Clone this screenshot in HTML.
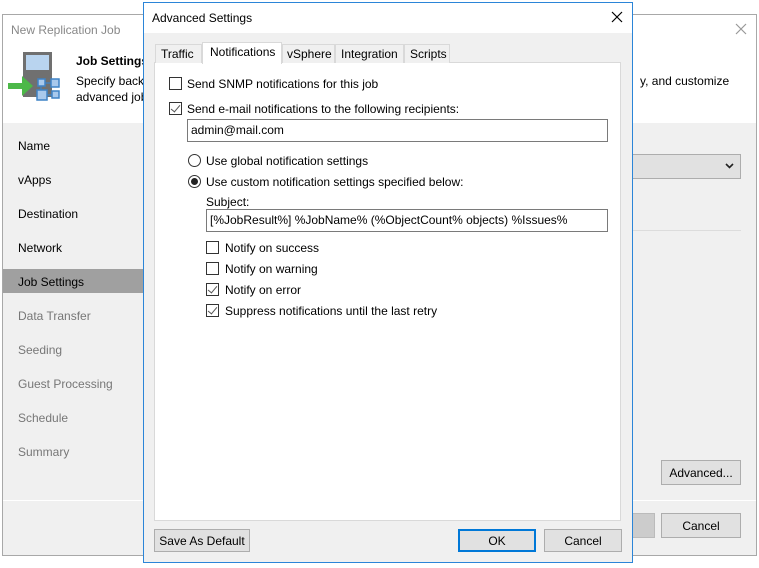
<!DOCTYPE html>
<html><head><style>
*{box-sizing:border-box;margin:0;padding:0}
body{width:759px;height:568px;background:#fff;font-family:"Liberation Sans",sans-serif;font-size:12px;color:#000;position:relative;overflow:hidden}
.a{position:absolute}
.cb{position:absolute;width:13px;height:13px;border:1px solid #333;background:#fff}
.cb.c::after{content:"";position:absolute;left:3px;top:0px;width:4px;height:8px;border:solid #555;border-width:0 1.5px 1.5px 0;transform:rotate(40deg)}
.rb{position:absolute;width:13px;height:13px;border:1px solid #333;border-radius:50%;background:#fff}
.rb.c::after{content:"";position:absolute;left:2px;top:2px;width:7px;height:7px;border-radius:50%;background:#222}
.btn{position:absolute;background:#e1e1e1;border:1px solid #adadad;text-align:center;line-height:22px}
.nav{position:absolute;left:18px}
.tab{position:absolute;top:44px;height:19px;border:1px solid #d9d9d9;border-bottom:none;background:#f0f0f0;line-height:18px;padding-left:5px}
</style></head><body>
<div class="a" style="left:2px;top:14px;width:755px;height:542px;border:1px solid #a8a8a8;background:#f0f0f0"></div>
<div class="a" style="left:3px;top:15px;width:753px;height:108px;background:#fff"></div>
<div class="a" style="left:11px;top:23px;color:#888;font-size:12px">New Replication Job</div>
<svg class="a" style="left:735px;top:23px" width="12" height="12"><path d="M1 1L11 11M11 1L1 11" stroke="#999" stroke-width="1.2"/></svg>
<svg class="a" style="left:8px;top:50px" width="56" height="52">
<rect x="15" y="2" width="29" height="45" fill="#707070"/>
<rect x="18" y="5" width="23" height="15" fill="#b9d4ef"/>
<path d="M0 33h14v-7l11 10-11 10v-7H0z" fill="#4cb848"/>
<path d="M33 31v15M33 33h15M33 45h12" stroke="#3f83c6" stroke-width="1.2"/>
<g fill="#a9c9ec" stroke="#3f83c6" stroke-width="1.5"><rect x="30" y="29" width="7" height="7"/><rect x="43" y="29" width="8" height="8"/><rect x="29" y="40" width="10" height="10"/><rect x="44" y="41" width="7" height="7"/></g>
</svg>
<div class="a" style="left:76px;top:54px;font-weight:bold">Job Settings</div>
<div class="a" style="left:76px;top:74px">Specify backup</div>
<div class="a" style="left:76px;top:90px">advanced job</div>
<div class="a" style="left:640px;top:74px">y, and customize</div>
<div class="a" style="left:3px;top:269px;width:141px;height:24px;background:#a0a0a0"></div>
<div class="nav" style="top:139px">Name</div>
<div class="nav" style="top:173px">vApps</div>
<div class="nav" style="top:207px">Destination</div>
<div class="nav" style="top:241px">Network</div>
<div class="nav" style="top:275px">Job Settings</div>
<div class="nav" style="top:309px;color:#777">Data Transfer</div>
<div class="nav" style="top:343px;color:#777">Seeding</div>
<div class="nav" style="top:377px;color:#777">Guest Processing</div>
<div class="nav" style="top:411px;color:#777">Schedule</div>
<div class="nav" style="top:445px;color:#777">Summary</div>
<div class="a" style="left:3px;top:500px;width:753px;height:1px;background:#fff"></div>
<div class="a" style="left:630px;top:154px;width:111px;height:25px;background:#e1e1e1;border:1px solid #adadad"></div>
<svg class="a" style="left:725px;top:163px" width="9" height="6"><path d="M1 1L4.5 4.5L8 1" stroke="#222" stroke-width="1.6" fill="none"/></svg>
<div class="a" style="left:630px;top:230px;width:111px;height:1px;background:#dcdcdc"></div>
<div class="btn" style="left:661px;top:460px;width:80px;height:25px;line-height:24px">Advanced...</div>
<div class="btn" style="left:630px;top:513px;width:25px;height:25px;background:#ccc;border-color:#bbb"></div>
<div class="btn" style="left:661px;top:513px;width:80px;height:25px;line-height:24px">Cancel</div>
<div class="a" style="left:143px;top:2px;width:490px;height:561px;border:1px solid #2b85d8;background:#f0f0f0"></div>
<div class="a" style="left:144px;top:3px;width:488px;height:30px;background:#fff"></div>
<div class="a" style="left:152px;top:11px">Advanced Settings</div>
<svg class="a" style="left:611px;top:11px" width="12" height="12"><path d="M1 1L11 11M11 1L1 11" stroke="#000" stroke-width="1.2"/></svg>
<div class="a" style="left:154px;top:62px;width:467px;height:459px;background:#fff;border:1px solid #d9d9d9"></div>
<div class="tab" style="left:155px;width:47px">Traffic</div>
<div class="tab" style="left:282px;width:53px;padding-left:4px">vSphere</div>
<div class="tab" style="left:335px;width:69px">Integration</div>
<div class="tab" style="left:404px;width:46px">Scripts</div>
<div class="tab" style="left:202px;top:42px;height:22px;width:80px;background:#fff;padding-left:7px">Notifications</div>
<div class="cb" style="left:169px;top:77px"></div><div class="a" style="left:187px;top:77px">Send SNMP notifications for this job</div>
<div class="cb c" style="left:169px;top:102px"></div><div class="a" style="left:187px;top:102px">Send e-mail notifications to the following recipients:</div>
<div class="a" style="left:187px;top:119px;width:421px;height:23px;border:1px solid #7a7a7a;background:#fff;padding:3px 3px">admin@mail.com</div>
<div class="rb" style="left:188px;top:154px"></div><div class="a" style="left:206px;top:154px">Use global notification settings</div>
<div class="rb c" style="left:188px;top:175px"></div><div class="a" style="left:206px;top:175px">Use custom notification settings specified below:</div>
<div class="a" style="left:206px;top:195px">Subject:</div>
<div class="a" style="left:206px;top:209px;width:402px;height:23px;border:1px solid #7a7a7a;background:#fff;padding:3px 3px">[%JobResult%] %JobName% (%ObjectCount% objects) %Issues%</div>
<div class="cb" style="left:206px;top:241px"></div><div class="a" style="left:225px;top:241px">Notify on success</div>
<div class="cb" style="left:206px;top:262px"></div><div class="a" style="left:225px;top:262px">Notify on warning</div>
<div class="cb c" style="left:206px;top:283px"></div><div class="a" style="left:225px;top:283px">Notify on error</div>
<div class="cb c" style="left:206px;top:304px"></div><div class="a" style="left:225px;top:304px">Suppress notifications until the last retry</div>
<div class="btn" style="left:154px;top:529px;width:96px;height:23px">Save As Default</div>
<div class="btn" style="left:458px;top:529px;width:78px;height:23px;border:2px solid #0078d7;line-height:20px">OK</div>
<div class="btn" style="left:544px;top:529px;width:78px;height:23px">Cancel</div>
</body></html>
